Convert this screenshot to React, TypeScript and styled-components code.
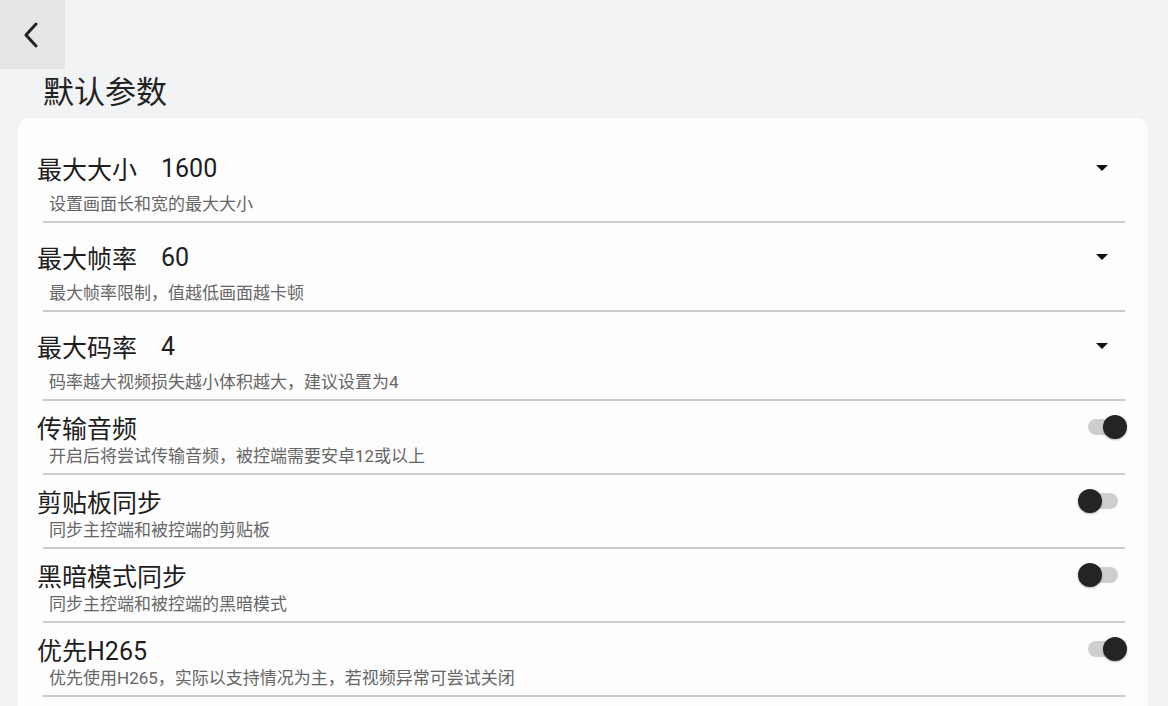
import styled, { createGlobalStyle } from "styled-components";

const GlobalStyle = createGlobalStyle`
  html, body {
    margin: 0;
    padding: 0;
    height: 100%;
    overflow: hidden;
    background: #f2f3f5;
    font-family: Roboto, "Noto Sans CJK SC", sans-serif;
    color: #1f1f1f;
  }
`;

type Option =
  | { kind: "select"; title: string; value: string; desc: string }
  | { kind: "switch"; title: string; on: boolean; desc: string };

const options: Option[] = [
  { kind: "select", title: "最大大小", value: "1600", desc: "设置画面长和宽的最大大小" },
  { kind: "select", title: "最大帧率", value: "60", desc: "最大帧率限制，值越低画面越卡顿" },
  { kind: "select", title: "最大码率", value: "4", desc: "码率越大视频损失越小体积越大，建议设置为4" },
  { kind: "switch", title: "传输音频", on: true, desc: "开启后将尝试传输音频，被控端需要安卓12或以上" },
  { kind: "switch", title: "剪贴板同步", on: false, desc: "同步主控端和被控端的剪贴板" },
  { kind: "switch", title: "黑暗模式同步", on: false, desc: "同步主控端和被控端的黑暗模式" },
  { kind: "switch", title: "优先H265", on: true, desc: "优先使用H265，实际以支持情况为主，若视频异常可尝试关闭" },
];

export default function App() {
  return (
    <Page>
      <GlobalStyle />
      <BackButton aria-label="返回">
        <svg width="16" height="26" viewBox="0 0 16 26">
          <path d="M13 2 L3 13 L13 24" fill="none" stroke="#222" strokeWidth="3" strokeLinecap="round" strokeLinejoin="round" />
        </svg>
      </BackButton>
      <Heading>默认参数</Heading>
      <Card>
        {options.map((opt) => (
          <Row key={opt.title} $select={opt.kind === "select"}>
            <Head $select={opt.kind === "select"}>
              <Title>{opt.title}</Title>
              {opt.kind === "select" && <Value>{opt.value}</Value>}
              <Spacer />
              {opt.kind === "select" ? (
                <Arrow />
              ) : (
                <Switch>
                  <Track />
                  <Thumb $on={opt.on} />
                </Switch>
              )}
            </Head>
            <Desc $select={opt.kind === "select"}>{opt.desc}</Desc>
            <Divider />
          </Row>
        ))}
      </Card>
    </Page>
  );
}

const Page = styled.div`
  display: flex;
  flex-direction: column;
  height: 706px;
`;

const BackButton = styled.button`
  width: 65px;
  height: 69px;
  border: none;
  padding: 0 3px 0 0;
  background: #e6e6e8;
  display: flex;
  align-items: center;
  justify-content: center;
`;

const Heading = styled.h1`
  margin: 5px 0 0 43px;
  font-size: 31px;
  font-weight: 400;
  line-height: 37px;
  color: #222;
`;

const Card = styled.div`
  margin: 7px 20px 0 18px;
  padding-top: 16px;
  background: #fdfdfd;
  border-radius: 12px 12px 0 0;
  flex: 1;
  overflow: hidden;
`;

const Row = styled.div<{ $select: boolean }>`
  display: flex;
  flex-direction: column;
  padding-top: ${(p) => (p.$select ? 16 : 10)}px;
`;

const Head = styled.div<{ $select: boolean }>`
  display: flex;
  align-items: center;
  height: ${(p) => (p.$select ? 36 : 32)}px;
  padding: 0 21px 0 19px;
`;

const Title = styled.span`
  font-size: 25px;
  color: #1e1e1e;
  white-space: nowrap;
`;

const Value = styled.span`
  margin-left: 24px;
  font-size: 25px;
  color: #1e1e1e;
`;

const Spacer = styled.div`
  flex: 1;
`;

const Arrow = styled.div`
  width: 0;
  height: 0;
  margin-right: 19px;
  border-left: 6px solid transparent;
  border-right: 6px solid transparent;
  border-top: 6px solid #111;
`;

const Switch = styled.div`
  position: relative;
  width: 49px;
  height: 24px;
`;

const Track = styled.div`
  position: absolute;
  left: 10px;
  top: 4px;
  width: 30px;
  height: 16px;
  border-radius: 8px;
  background: #cfcfcf;
`;

const Thumb = styled.div<{ $on: boolean }>`
  position: absolute;
  top: 0;
  left: ${(p) => (p.$on ? 25 : 0)}px;
  width: 24px;
  height: 24px;
  border-radius: 50%;
  background: #242424;
  box-shadow: 0 1px 2px rgba(0, 0, 0, 0.3);
`;

const Desc = styled.div<{ $select: boolean }>`
  margin-top: ${(p) => (p.$select ? 8 : 3)}px;
  padding-left: 31px;
  font-size: 17px;
  line-height: 20px;
  color: #666;
  white-space: nowrap;
`;

const Divider = styled.div`
  margin: 7px 23px 0 25px;
  height: 2px;
  background: #cccccc;
`;
